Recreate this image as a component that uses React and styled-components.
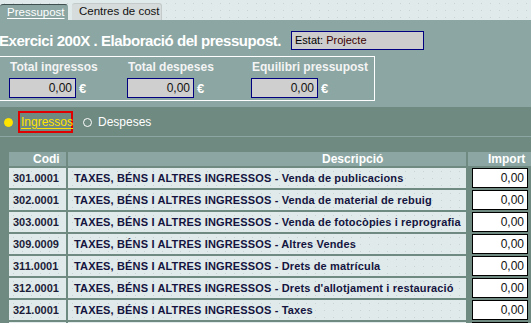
import React from 'react';
import styled, { createGlobalStyle } from 'styled-components';

const GlobalStyle = createGlobalStyle`
  html, body {
    margin: 0;
    padding: 0;
    background: #6f8a81;
    overflow: hidden;
  }
  body {
    font-family: "Liberation Sans", Arial, sans-serif;
    font-size: 12px;
  }
`;

const dots = `
  background-image: radial-gradient(rgba(150, 170, 170, 0.35) 0.6px, transparent 0.8px);
  background-size: 9px 7px;
`;

const TabStrip = styled.div`
  height: 20px;
  background-color: #e1eaea;
  ${dots}
  display: flex;
  align-items: flex-end;
  gap: 4px;
`;

const Tab = styled.div`
  box-sizing: border-box;
  height: ${(p) => (p.$active ? '16px' : '17px')};
  padding-left: 7px;
  width: ${(p) => (p.$active ? '68px' : '90px')};
  border-radius: 3px 3px 0 0;
  background: ${(p) => (p.$active ? '#8ba6a3' : '#d6dbdb')};
  border-top: 1px solid ${(p) => (p.$active ? '#3f4f4f' : '#c4caca')};
  border-right: 1px solid ${(p) => (p.$active ? '#8ba6a3' : '#c4caca')};
  color: ${(p) => (p.$active ? '#ffffff' : '#111111')};
  font-size: 11.5px;
  line-height: 14px;
  white-space: nowrap;

  span {
    text-decoration: ${(p) => (p.$active ? 'underline' : 'none')};
    text-underline-offset: 2px;
  }
`;

const Panel = styled.div`
  background: #8ba6a3;
  height: 87px;
  box-sizing: border-box;
  padding-top: 11px;
`;

const TitleRow = styled.div`
  display: flex;
  align-items: center;
  height: 19px;
`;

const Title = styled.h1`
  margin: 0 0 0 -1px;
  font-size: 15px;
  font-weight: bold;
  color: #ffffff;
  white-space: nowrap;
  width: 292px;
  letter-spacing: -0.45px;
`;

const StatusBox = styled.div`
  box-sizing: border-box;
  width: 133px;
  height: 19px;
  border: 1px solid #000080;
  background: #cdcdcd;
  padding-left: 3px;
  font-size: 11px;
  line-height: 17px;
  color: #000;

  b {
    font-weight: normal;
    color: #3a0000;
  }
`;

const TotalsBox = styled.div`
  box-sizing: border-box;
  margin-top: 6px;
  width: 375px;
  height: 45px;
  border: 1px solid #ffffff;
  border-left: none;
  display: grid;
  grid-template-columns: 118px 124px auto;
  padding: 3px 0 0 9px;
`;

const Group = styled.div`
  display: flex;
  flex-direction: column;
  gap: 4px;
`;

const Label = styled.div`
  color: #f4f4f4;
  font-weight: bold;
  font-size: 12px;
  line-height: 14px;
  padding-left: 1px;
`;

const AmountRow = styled.div`
  display: flex;
  align-items: center;
  gap: 3px;
  color: #ffffff;
  font-weight: bold;
  font-size: 13px;
`;

const AmountField = styled.div`
  box-sizing: border-box;
  width: 67px;
  height: 20px;
  border: 1px solid #000080;
  background: #cfcfcf;
  text-align: right;
  padding-right: 3px;
  font-size: 12px;
  line-height: 18px;
  color: #111;
  font-weight: normal;
`;

const RadioBar = styled.div`
  height: 29px;
  border-bottom: 1px solid #8ba6a3;
  display: flex;
  align-items: center;
  padding-left: 4px;
`;

const Dot = styled.span`
  box-sizing: border-box;
  width: 9px;
  height: 9px;
  border-radius: 50%;
  background: ${(p) => (p.$on ? '#ffe400' : 'transparent')};
  border: 1px solid ${(p) => (p.$on ? '#ffe400' : '#ffffff')};
  margin-top: 2px;
`;

const RadioLabel = styled.span`
  box-sizing: border-box;
  height: 22px;
  display: flex;
  align-items: center;
  font-size: 12px;
  color: ${(p) => (p.$on ? '#ffe400' : '#ffffff')};
  text-decoration: ${(p) => (p.$on ? 'underline' : 'none')};
  text-underline-offset: 2px;
  border: 2px solid ${(p) => (p.$on ? '#e00000' : 'transparent')};
  margin: 0 10px 0 ${(p) => (p.$on ? '5px' : '4px')};
  width: ${(p) => (p.$on ? '55px' : 'auto')};
  padding-left: ${(p) => (p.$on ? '1px' : '0')};
`;

const TableArea = styled.div`
  padding: 15px 0 0 9px;
`;

const Grid = styled.div`
  display: grid;
  grid-template-columns: 57px 398px 80px;
  grid-auto-rows: 20px;
  grid-template-rows: 14px;
  gap: 2px;
`;

const HeadCell = styled.div`
  background: #8ba6a3;
  color: #ffffff;
  font-weight: bold;
  font-size: 12px;
  line-height: 14px;
  padding-left: ${(p) => p.$pad}px;
  white-space: nowrap;
`;

const Cell = styled.div`
  background-color: #e0eaea;
  ${dots}
  color: ${(p) => (p.$code ? '#1c1c38' : '#141440')};
  font-weight: bold;
  font-size: 11px;
  letter-spacing: ${(p) => (p.$code ? '0' : '0.15px')};
  line-height: 20px;
  padding-left: ${(p) => (p.$code ? '4px' : '6px')};
  white-space: nowrap;
  overflow: hidden;
`;

const ImportCell = styled.div`
  padding-left: 4px;
`;

const ImportInput = styled.div`
  box-sizing: border-box;
  width: 56px;
  height: 20px;
  border: 1px solid #000;
  background: #ffffff;
  text-align: right;
  padding-right: 3px;
  font-size: 12px;
  line-height: 18px;
  color: #111;
`;

const rows = [
  ['301.0001', 'Venda de publicacions'],
  ['302.0001', 'Venda de material de rebuig'],
  ['303.0001', 'Venda de fotocòpies i reprografia'],
  ['309.0009', 'Altres Vendes'],
  ['311.0001', 'Drets de matrícula'],
  ['312.0001', "Drets d'allotjament i restauració"],
  ['321.0001', 'Taxes'],
  ['321.0002', 'Taxes'],
];

const totals = ['Total ingressos', 'Total despeses', 'Equilibri pressupost'];

export default function App() {
  return (
    <>
      <GlobalStyle />
      <TabStrip>
        <Tab $active>
          <span>Pressupost</span>
        </Tab>
        <Tab>
          <span>Centres de cost</span>
        </Tab>
      </TabStrip>
      <Panel>
        <TitleRow>
          <Title>Exercici 200X . Elaboració del pressupost.</Title>
          <StatusBox>
            Estat: <b>Projecte</b>
          </StatusBox>
        </TitleRow>
        <TotalsBox>
          {totals.map((t) => (
            <Group key={t}>
              <Label>{t}</Label>
              <AmountRow>
                <AmountField>0,00</AmountField>€
              </AmountRow>
            </Group>
          ))}
        </TotalsBox>
      </Panel>
      <RadioBar>
        <Dot $on />
        <RadioLabel $on>Ingressos</RadioLabel>
        <Dot />
        <RadioLabel>Despeses</RadioLabel>
      </RadioBar>
      <TableArea>
        <Grid>
          <HeadCell $pad={24}>Codi</HeadCell>
          <HeadCell $pad={254}>Descripció</HeadCell>
          <HeadCell $pad={20}>Import</HeadCell>
          {rows.map(([code, desc], i) => (
            <React.Fragment key={i}>
              <Cell $code>{code}</Cell>
              <Cell>TAXES, BÉNS I ALTRES INGRESSOS - {desc}</Cell>
              <ImportCell>
                <ImportInput>0,00</ImportInput>
              </ImportCell>
            </React.Fragment>
          ))}
        </Grid>
      </TableArea>
    </>
  );
}
